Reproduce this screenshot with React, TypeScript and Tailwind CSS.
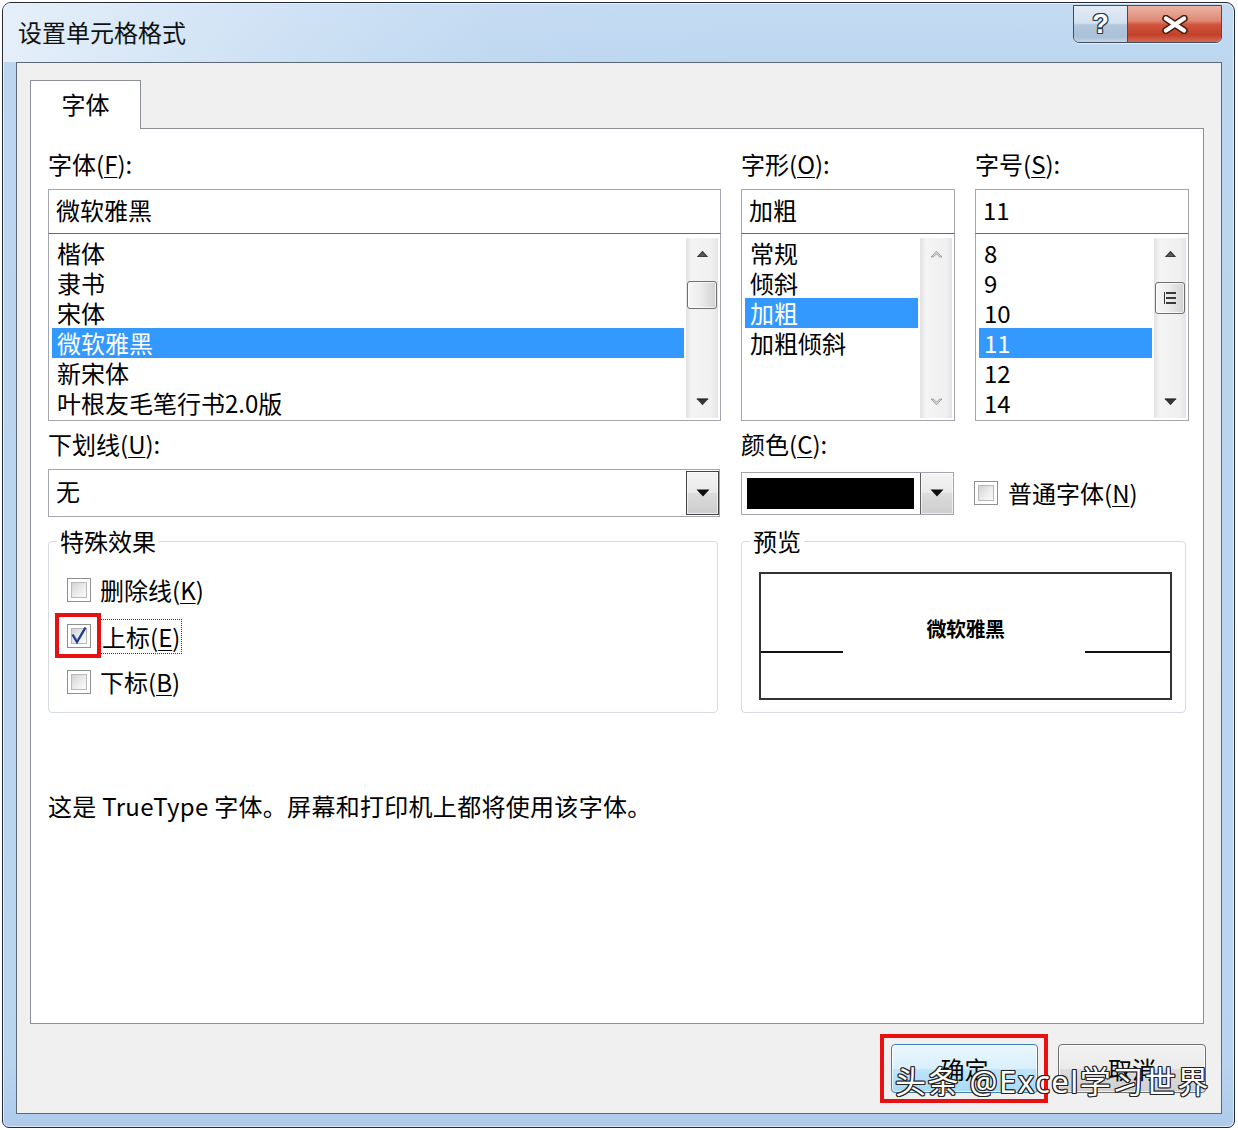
import React from "react";

const FONT = "font-['Noto_Sans_CJK_SC','Noto_Sans',sans-serif]";

function Acc({ k }: { k: string }) {
  return <span className="underline decoration-1 underline-offset-[3px]">{k}</span>;
}

function UpArrow({ disabled }: { disabled?: boolean }) {
  if (disabled) {
    return (
      <svg width="13" height="8" viewBox="0 0 13 8">
        <path d="M1 7 L6.5 1.2 L12 7 L9.6 7 L6.5 3.8 L3.4 7 Z" fill="#d4d4d4" stroke="#9c9c9c" strokeWidth="0.9" strokeLinejoin="round" />
      </svg>
    );
  }
  return (
    <svg width="13" height="8" viewBox="0 0 13 8">
      <path d="M0.8 7 L6.5 0.8 L12.2 7 Z" fill="#353535" />
      <path d="M3 6.2 L6.5 2.6 L10 6.2 Z" fill="#5a5a5a" />
    </svg>
  );
}

function DownArrow({ disabled }: { disabled?: boolean }) {
  if (disabled) {
    return (
      <svg width="13" height="8" viewBox="0 0 13 8">
        <path d="M1 1 L6.5 6.8 L12 1 L9.6 1 L6.5 4.2 L3.4 1 Z" fill="#d4d4d4" stroke="#9c9c9c" strokeWidth="0.9" strokeLinejoin="round" />
      </svg>
    );
  }
  return (
    <svg width="13" height="8" viewBox="0 0 13 8">
      <path d="M0.8 1 L6.5 7.2 L12.2 1 Z" fill="#353535" />
      <path d="M0.8 1 L12.2 1" stroke="#222" strokeWidth="1.2" />
    </svg>
  );
}

function ComboArrow() {
  return (
    <svg width="14" height="8" viewBox="0 0 14 8">
      <path d="M0.5 0.5 H13.5 L7 7.5 Z" fill="#0d0d0d" />
    </svg>
  );
}

function Scrollbar({ kind }: { kind: "font" | "style" | "size" }) {
  const disabled = kind === "style";
  return (
    <div className="flex w-[32px] flex-col bg-[linear-gradient(to_right,#e2e2e2,#f4f4f4_18%,#f0f0f0_80%,#e4e4e4)]">
      <div className="flex h-[32px] items-center justify-center">
        <UpArrow disabled={disabled} />
      </div>
      <div className="flex-1">
        {kind === "font" && (
          <div className="ml-[1px] mt-[11px] h-[28px] w-[30px] rounded-[3px] border border-[#707070] bg-[linear-gradient(to_right,#f7f7f7,#ececec_45%,#d2d2d2)] shadow-[inset_0_0_0_1px_rgba(255,255,255,0.7)]" />
        )}
        {kind === "size" && (
          <div className="ml-[1px] mt-[12px] flex h-[32px] w-[30px] items-center justify-center rounded-[3px] border border-[#707070] bg-[linear-gradient(to_right,#f7f7f7,#ececec_45%,#d2d2d2)] shadow-[inset_0_0_0_1px_rgba(255,255,255,0.7)]">
            <div className="flex flex-col gap-[3px] border-l border-[#333] pl-[1px]">
              <div className="h-[2px] w-[10px] bg-[#3a3a3a]" />
              <div className="h-[2px] w-[10px] bg-[#3a3a3a]" />
              <div className="h-[2px] w-[10px] bg-[#3a3a3a]" />
            </div>
          </div>
        )}
      </div>
      <div className="flex h-[32px] items-center justify-center">
        <DownArrow disabled={disabled} />
      </div>
    </div>
  );
}

function ListBox({
  items,
  selected,
  kind,
}: {
  items: string[];
  selected: string;
  kind: "font" | "style" | "size";
}) {
  return (
    <div className="flex h-[187px] gap-[2px] border-x border-b border-[#a3a7ad] bg-white pb-[2px] pl-[3px] pr-[2px] pt-[4px]">
      <div className="flex-1">
        {items.map((it) => (
          <div
            key={it}
            className={
              it === selected
                ? "h-[30px] whitespace-nowrap bg-[#3399ff] pl-[5px] text-[24px] leading-[29px] text-white"
                : "h-[30px] whitespace-nowrap pl-[5px] text-[24px] leading-[29px] text-black"
            }
          >
            {it}
          </div>
        ))}
      </div>
      <Scrollbar kind={kind} />
    </div>
  );
}

function TextInput({ value }: { value: string }) {
  return (
    <div className="h-[45px] border border-[#a3a7ad] border-b-[#5f6c79] bg-white pl-[7px] text-[24px] leading-[40px]">
      {value}
    </div>
  );
}

function CheckBox({ checked }: { checked?: boolean }) {
  return (
    <div className="h-[24px] w-[24px] shrink-0 border border-[#8e8f8f] bg-white p-[3px]">
      <div className="relative h-full w-full border border-[#b9b9b9] bg-[linear-gradient(135deg,#d3d3d3,#ececec_55%,#fbfbfb)]">
        {checked && (
          <svg className="absolute left-[-3px] top-[-4px]" width="20" height="20" viewBox="0 0 20 20">
            <path d="M3.5 9.5 L8 17 L16.5 2.5" fill="none" stroke="#1f3a8c" strokeWidth="2.4" strokeLinejoin="miter" />
            <path d="M5 10 L8.2 14.8" fill="none" stroke="#7d8fc4" strokeWidth="1" />
          </svg>
        )}
      </div>
    </div>
  );
}

export default function App() {
  return (
    <div className={`relative h-[1130px] w-[1238px] overflow-hidden bg-white pl-[2px] pt-[2px] text-black ${FONT}`}>
      {/* window */}
      <div className="flex h-[1126px] w-[1233px] flex-col rounded-b-[7px] rounded-t-[9px] border border-[#262a30] bg-[linear-gradient(to_bottom,#c4dbf2,#bcd6f0_6%,#b9d4ef_94%,#aecbec)] shadow-[inset_0_0_0_1px_rgba(255,255,255,0.6)]">
        {/* title bar */}
        <div className="flex h-[59px] items-start rounded-t-[8px] bg-[linear-gradient(to_right,rgba(235,243,251,0.85)_0%,rgba(222,235,248,0.6)_18%,rgba(200,221,243,0.2)_40%,rgba(190,214,240,0)_60%)]">
          <div className="flex-1 pl-[15px] pt-[14px] text-[24px] leading-[30px] text-[#111]">设置单元格格式</div>
          <div className="mr-[12px] mt-[2px] flex h-[38px] overflow-hidden rounded-b-[6px] border border-[#3f4d5e] shadow-[0_1px_0_rgba(255,255,255,0.6)]">
            <div className="flex w-[54px] items-center justify-center border-r border-[#3f4d5e] bg-[linear-gradient(to_bottom,#e3ecf6,#d3e0ee_48%,#b3c8dd_52%,#aac0d7_85%,#c3d4e6)]">
              <span className="font-['Liberation_Sans',sans-serif] text-[27px] font-bold leading-none text-white [text-shadow:1px_1px_0_#27374a,-1px_-1px_0_#27374a,1px_-1px_0_#27374a,-1px_1px_0_#27374a,0_1px_0_#27374a,0_-1px_0_#27374a,1px_0_0_#27374a,-1px_0_0_#27374a]">
                ?
              </span>
            </div>
            <div className="flex w-[93px] items-center justify-center bg-[linear-gradient(to_bottom,#eab4a6,#e08a77_40%,#d0553c_52%,#c2412a_80%,#d46a50)]">
              <svg width="28" height="19" viewBox="0 0 28 19">
                <path d="M5 3.5 L23 15.5 M23 3.5 L5 15.5" stroke="#4b1b12" strokeWidth="7.5" strokeLinecap="round" />
                <path d="M5 3.5 L23 15.5 M23 3.5 L5 15.5" stroke="#ffffff" strokeWidth="4.4" strokeLinecap="round" />
              </svg>
            </div>
          </div>
        </div>

        {/* client area */}
        <div className="ml-[13px] mr-[12px] h-[1052px] border border-[#5b6774] bg-[#f0f0f0] pl-[13px] pt-[17px]">
          {/* tab */}
          <div className="relative z-10 -mb-px h-[49px] w-[111px] border border-b-0 border-[#8c9096] bg-white text-center text-[24px] leading-[46px]">
            字体
          </div>
          {/* panel */}
          <div className="h-[896px] w-[1174px] border border-[#8c9096] bg-white pl-[17px] pt-[20px]">
            {/* labels row 1 */}
            <div className="flex gap-[20px] text-[24px] leading-[30px]">
              <div className="w-[673px]">
                字体(<Acc k="F" />):
              </div>
              <div className="w-[214px]">
                字形(<Acc k="O" />):
              </div>
              <div className="w-[214px]">
                字号(<Acc k="S" />):
              </div>
            </div>
            {/* lists */}
            <div className="mt-[10px] flex gap-[20px]">
              <div className="w-[673px]">
                <TextInput value="微软雅黑" />
                <ListBox kind="font" items={["楷体", "隶书", "宋体", "微软雅黑", "新宋体", "叶根友毛笔行书2.0版"]} selected="微软雅黑" />
              </div>
              <div className="w-[214px]">
                <TextInput value="加粗" />
                <ListBox kind="style" items={["常规", "倾斜", "加粗", "加粗倾斜"]} selected="加粗" />
              </div>
              <div className="w-[214px]">
                <TextInput value="11" />
                <ListBox kind="size" items={["8", "9", "10", "11", "12", "14"]} selected="11" />
              </div>
            </div>

            {/* labels row 2 */}
            <div className="mt-[8px] flex gap-[20px] text-[24px] leading-[30px]">
              <div className="w-[673px]">
                下划线(<Acc k="U" />):
              </div>
              <div className="w-[214px]">
                颜色(<Acc k="C" />):
              </div>
            </div>

            {/* combos row */}
            <div className="mt-[10px] flex h-[48px] items-center">
              <div className="flex h-[48px] w-[672px] border border-[#a3a7ad] bg-white">
                <div className="flex-1 pl-[7px] text-[24px] leading-[42px]">无</div>
                <div className="my-[1px] flex w-[33px] items-center justify-center border border-[#434343] bg-[linear-gradient(to_bottom,#f4f4f4,#e9e9e9_50%,#dcdcdc_50%,#cdcdcd)] shadow-[inset_0_0_0_1px_rgba(255,255,255,0.6)]">
                  <ComboArrow />
                </div>
              </div>
              <div className="ml-[21px] flex h-[43px] w-[213px] border border-[#a3a7ad] bg-white">
                <div className="my-[5px] ml-[5px] w-[167px] bg-black" />
                <div className="flex-1" />
                <div className="flex w-[33px] items-center justify-center border-l border-[#5e5e5e] bg-[linear-gradient(to_bottom,#f4f4f4,#e9e9e9_50%,#dcdcdc_50%,#cdcdcd)] shadow-[inset_0_0_0_1px_rgba(255,255,255,0.6)]">
                  <ComboArrow />
                </div>
              </div>
              <div className="ml-[20px] flex items-center gap-[10px]">
                <CheckBox />
                <span className="text-[24px] leading-[28px]">
                  普通字体(<Acc k="N" />)
                </span>
              </div>
            </div>

            {/* group boxes */}
            <div className="mt-[11px] flex">
              <fieldset className="h-[185px] w-[670px] rounded-[4px] border border-[#d5dbe1]">
                <legend className="ml-[8px] px-[3px] text-[24px] leading-[26px]">特殊效果</legend>
                <div className="flex flex-col gap-[22px] pl-[18px] pt-[24px]">
                  <div className="flex h-[24px] items-center gap-[9px]">
                    <CheckBox />
                    <span className="text-[24px] leading-[28px]">
                      删除线(<Acc k="K" />)
                    </span>
                  </div>
                  <div className="flex h-[24px] items-center gap-[9px]">
                    <div className="relative">
                      <CheckBox checked />
                      <div className="absolute left-[-12px] top-[-11px] h-[45px] w-[46px] border-4 border-[#e81010]" />
                    </div>
                    <span className="border border-dotted border-[#3a3a3a] px-[1px] text-[24px] leading-[33px]">
                      上标(<Acc k="E" />)
                    </span>
                  </div>
                  <div className="flex h-[24px] items-center gap-[9px]">
                    <CheckBox />
                    <span className="text-[24px] leading-[28px]">
                      下标(<Acc k="B" />)
                    </span>
                  </div>
                </div>
              </fieldset>
              <fieldset className="ml-[23px] h-[185px] w-[445px] rounded-[4px] border border-[#d5dbe1]">
                <legend className="ml-[8px] px-[3px] text-[24px] leading-[26px]">预览</legend>
                <div className="pl-[17px] pr-[13px] pt-[18px]">
                  <div className="h-[128px] border-2 border-[#333]">
                    <div className="mt-[44px] h-[24px] text-center text-[20px] font-bold leading-[22px] tracking-[-0.5px]">微软雅黑</div>
                    <div className="mt-[9px] flex h-[2px] justify-between">
                      <div className="h-[2px] w-[82px] bg-[#111]" />
                      <div className="h-[2px] w-[85px] bg-[#111]" />
                    </div>
                  </div>
                </div>
              </fieldset>
            </div>

            {/* description */}
            <div className="mt-[78px] text-[24px] leading-[30px] tracking-[0.3px]">这是 TrueType 字体。屏幕和打印机上都将使用该字体。</div>
          </div>

          {/* buttons */}
          <div className="mt-[20px] flex w-[1176px] justify-end gap-[20px]">
            <div className="relative flex h-[49px] w-[147px] items-center justify-center rounded-[4px] border border-[#3c7fb1] bg-[linear-gradient(to_bottom,#eaf6fd,#d9f0fc_50%,#bee6fd_50%,#a7d9f5)] text-[24px] leading-[30px] shadow-[inset_0_0_0_1px_rgba(255,255,255,0.7)]">
              确定
              <div className="absolute -bottom-[11px] -left-[12px] -right-[11px] -top-[11px] border-4 border-[#e81010]" />
            </div>
            <div className="flex h-[49px] w-[148px] items-center justify-center rounded-[4px] border border-[#707070] bg-[linear-gradient(to_bottom,#f2f2f2,#ebebeb_50%,#dddddd_50%,#cfcfcf)] text-[24px] leading-[30px] shadow-[inset_0_0_0_1px_rgba(255,255,255,0.7)]">
              取消
            </div>
          </div>
        </div>
      </div>

      {/* watermark overlay */}
      <div className="absolute left-[895px] top-[1063px] whitespace-nowrap font-['Noto_Sans','Noto_Sans_CJK_SC',sans-serif] text-[31px] leading-[36px] tracking-[1.5px] text-white [text-shadow:1px_1px_0_#222,-1px_-1px_0_#222,1px_-1px_0_#222,-1px_1px_0_#222,0_1px_0_#222,0_-1px_0_#222,1px_0_0_#222,-1px_0_0_#222]">
        头条 @Excel学习世界
      </div>
    </div>
  );
}
